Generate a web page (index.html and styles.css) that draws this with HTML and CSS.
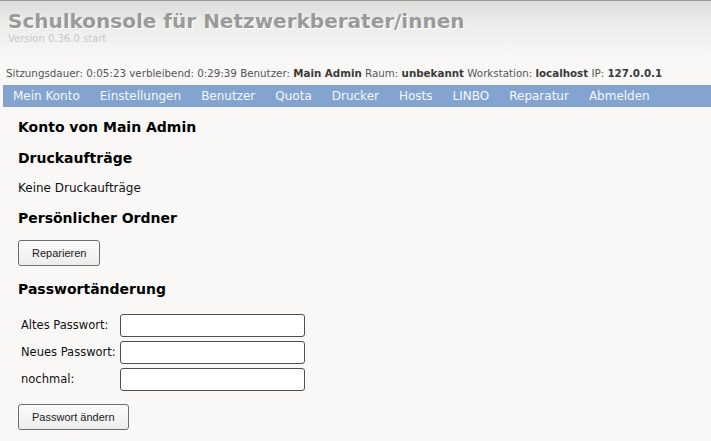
FILE: index.html
```html
<!DOCTYPE html>
<html lang="de">
<head>
<meta charset="utf-8">
<title>Schulkonsole</title>
<link rel="stylesheet" href="styles.css">
</head>
<body>
<header class="header">
  <h1 class="title">Schulkonsole für Netzwerkberater/innen</h1>
  <div class="version">Version 0.36.0 start</div>
</header>
<div class="status">Sitzungsdauer: 0:05:23 verbleibend: 0:29:39 Benutzer: <b>Main Admin</b> Raum: <b>unbekannt</b> Workstation: <b>localhost</b> IP: <b>127.0.0.1</b></div>
<nav class="menu">
  <a class="menu-item">Mein Konto</a>
  <a class="menu-item">Einstellungen</a>
  <a class="menu-item">Benutzer</a>
  <a class="menu-item">Quota</a>
  <a class="menu-item">Drucker</a>
  <a class="menu-item">Hosts</a>
  <a class="menu-item">LINBO</a>
  <a class="menu-item">Reparatur</a>
  <a class="menu-item">Abmelden</a>
</nav>
<main class="content">
  <h2 class="heading first">Konto von Main Admin</h2>
  <h3 class="heading">Druckaufträge</h3>
  <p class="text">Keine Druckaufträge</p>
  <h3 class="heading">Persönlicher Ordner</h3>
  <button class="btn">Reparieren</button>
  <h3 class="heading after-btn">Passwortänderung</h3>
  <form class="pwform">
    <label class="pwlabel">Altes Passwort:</label><input class="field" type="password">
    <label class="pwlabel">Neues Passwort:</label><input class="field" type="password">
    <label class="pwlabel">nochmal:</label><input class="field" type="password">
  </form>
  <button class="btn">Passwort ändern</button>
</main>
</body>
</html>
```
FILE: styles.css
```css
html, body {
  margin: 0;
  padding: 0;
  background: #f9f8f7;
  font-family: "DejaVu Sans", Verdana, sans-serif;
  color: #111;
}

.header {
  border-top: 1px solid #9a9894;
  padding: 8px 0 0 8px;
  box-sizing: border-box;
  height: 58px;
  background: linear-gradient(to bottom, #dcdcdb 0%, #ebebea 35%, #f9f8f7 100%);
}

.title {
  margin: 0;
  font-size: 20px;
  line-height: 24px;
  font-weight: bold;
  color: #9a9a9a;
  text-shadow: 1px 1px 0 #ffffff;
}

.version {
  font-size: 10px;
  line-height: 12px;
  color: #c8c8c8;
}

.status {
  padding: 8px 0 5px 6px;
  font-size: 10.3px;
  line-height: 14px;
  color: #555;
  white-space: nowrap;
}

.status b {
  color: #3a3a3a;
}

.menu {
  margin-left: 3px;
  height: 22px;
  display: flex;
  background: #83a4cf;
}

.menu-item {
  padding: 0 10px;
  font-size: 12px;
  line-height: 22px;
  color: #f4f7fb;
  white-space: nowrap;
}

.content {
  padding: 12px 0 0 18px;
}

.heading {
  margin: 14px 0 0;
  font-size: 14px;
  line-height: 17px;
  font-weight: bold;
  color: #000;
}

.heading.first {
  margin-top: 0;
}

.heading.after-btn {
  margin-top: 15px;
}

.text {
  margin: 14px 0 0;
  font-size: 12px;
  line-height: 15px;
}

.btn {
  display: block;
  margin: 13px 0 0;
  height: 26px;
  padding: 0 13px;
  border: 1px solid #6e6e6e;
  border-radius: 3px;
  background: linear-gradient(to bottom, #fbfbfb 0%, #ededed 100%);
  font-family: "Liberation Sans", Arial, sans-serif;
  font-size: 11px;
  color: #1a1a1a;
}

.pwform {
  margin: 16px 0 0 3px;
  display: grid;
  grid-template-columns: 99px 185px;
  row-gap: 4px;
  align-items: center;
}

.pwlabel {
  font-size: 11.5px;
  line-height: 15px;
  color: #111;
}

.field {
  box-sizing: border-box;
  width: 185px;
  height: 23px;
  margin: 0;
  border: 1px solid #4e4e4e;
  border-radius: 3px;
  background: #fff;
}

.pwform + .btn {
  margin-top: 13px;
}
```
